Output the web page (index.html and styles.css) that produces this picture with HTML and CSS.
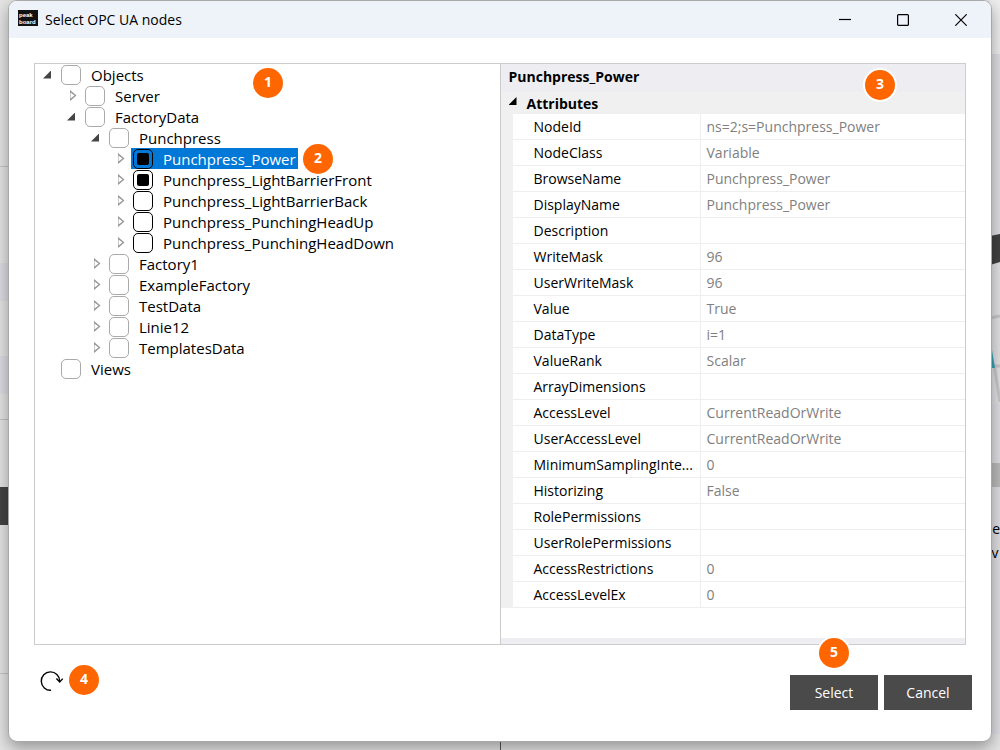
FILE: index.html
```html
<!DOCTYPE html>
<html lang="en">

<head>
    <meta charset="UTF-8">
    <meta name="viewport" content="width=device-width, initial-scale=1.0">
    <title>Select OPC UA nodes</title>
    <link rel="stylesheet" href="styles.css">
</head>

<body>
    <!-- parts of the designer behind the dialog -->
    <div class="backdrop">
        <div class="side-left">
            <div class="pane pane-top"></div>
            <div class="pane pane-gap"></div>
            <div class="pane-row"></div>
            <div class="pane pane-mid"></div>
            <div class="pane-row"></div>
            <div class="pane pane-small"></div>
            <div class="pane pane-low"></div>
            <div class="pane-dark"></div>
            <div class="pane pane-end"></div>
        </div>
        <div class="divider"></div>
        <div class="side-right">
            <svg class="gauge" width="10" height="170" viewBox="0 0 10 170">
                <path d="M0 3 L10 1 V170 H0Z" fill="#e2e2e4"/>
                <path d="M0 2 L10 0 V28 L0 31Z" fill="#414141"/>
                <path d="M0 84 L10 82 M0 132 H10 M4 130 L10 168" stroke="#c8c8ca" stroke-width="3" fill="none"/>
                <path d="M0 104 L5 134 H0Z" fill="#39a3b3"/>
            </svg>
            <div class="side-bar"></div>
            <div class="side-text">ne<br>ev</div>
        </div>
    </div>

    <div class="window">
        <div class="title-bar">
            <svg class="logo" width="20" height="16" viewBox="0 0 20 16">
                <rect width="20" height="16" fill="#111"/>
                <text x="1" y="7">peak</text>
                <text x="1" y="14">board</text>
            </svg>
            <h1 class="title">Select OPC UA nodes</h1>
            <button class="win-btn" aria-label="Minimize">
                <svg width="12" height="12" viewBox="0 0 12 12"><path d="M0 5.5H12"/></svg>
            </button>
            <button class="win-btn" aria-label="Maximize">
                <svg width="12" height="12" viewBox="0 0 12 12"><rect x=".6" y=".6" width="10.8" height="10.8" rx="1"/></svg>
            </button>
            <button class="win-btn" aria-label="Close">
                <svg width="12" height="12" viewBox="0 0 12 12"><path d="M.3 .3L11.7 11.7M11.7 .3L.3 11.7"/></svg>
            </button>
        </div>

        <div class="panels">
            <div class="tree-panel">
                <span class="badge badge-tree">1</span>
                <ul class="tree">
                    <li>
                        <div class="row"><button class="exp open" aria-label="Collapse"></button><label><input type="checkbox">Objects</label></div>
                        <ul>
                            <li>
                                <div class="row"><button class="exp" aria-label="Expand"></button><label><input type="checkbox">Server</label></div>
                            </li>
                            <li>
                                <div class="row"><button class="exp open" aria-label="Collapse"></button><label><input type="checkbox">FactoryData</label></div>
                                <ul>
                                    <li>
                                        <div class="row"><button class="exp open" aria-label="Collapse"></button><label><input type="checkbox">Punchpress</label></div>
                                        <ul class="vars">
                                            <li>
                                                <div class="row"><button class="exp" aria-label="Expand"></button><label class="selected"><input type="checkbox" checked>Punchpress_Power</label><span class="badge badge-node">2</span></div>
                                            </li>
                                            <li>
                                                <div class="row"><button class="exp" aria-label="Expand"></button><label><input type="checkbox" checked>Punchpress_LightBarrierFront</label></div>
                                            </li>
                                            <li>
                                                <div class="row"><button class="exp" aria-label="Expand"></button><label><input type="checkbox">Punchpress_LightBarrierBack</label></div>
                                            </li>
                                            <li>
                                                <div class="row"><button class="exp" aria-label="Expand"></button><label><input type="checkbox">Punchpress_PunchingHeadUp</label></div>
                                            </li>
                                            <li>
                                                <div class="row"><button class="exp" aria-label="Expand"></button><label><input type="checkbox">Punchpress_PunchingHeadDown</label></div>
                                            </li>
                                        </ul>
                                    </li>
                                    <li>
                                        <div class="row"><button class="exp" aria-label="Expand"></button><label><input type="checkbox">Factory1</label></div>
                                    </li>
                                    <li>
                                        <div class="row"><button class="exp" aria-label="Expand"></button><label><input type="checkbox">ExampleFactory</label></div>
                                    </li>
                                    <li>
                                        <div class="row"><button class="exp" aria-label="Expand"></button><label><input type="checkbox">TestData</label></div>
                                    </li>
                                    <li>
                                        <div class="row"><button class="exp" aria-label="Expand"></button><label><input type="checkbox">Linie12</label></div>
                                    </li>
                                    <li>
                                        <div class="row"><button class="exp" aria-label="Expand"></button><label><input type="checkbox">TemplatesData</label></div>
                                    </li>
                                </ul>
                            </li>
                        </ul>
                    </li>
                    <li>
                        <div class="row"><span class="no-exp"></span><label><input type="checkbox">Views</label></div>
                    </li>
                </ul>
            </div>

            <div class="props">
                <span class="badge badge-props">3</span>
                <h2 class="props-title">Punchpress_Power</h2>
                <div class="group"><button class="exp open" aria-label="Collapse"></button>Attributes</div>
                <div class="grid">
                    <table>
                        <tr><th scope="row">NodeId</th><td>ns=2;s=Punchpress_Power</td></tr>
                        <tr><th scope="row">NodeClass</th><td>Variable</td></tr>
                        <tr><th scope="row">BrowseName</th><td>Punchpress_Power</td></tr>
                        <tr><th scope="row">DisplayName</th><td>Punchpress_Power</td></tr>
                        <tr><th scope="row">Description</th><td></td></tr>
                        <tr><th scope="row">WriteMask</th><td>96</td></tr>
                        <tr><th scope="row">UserWriteMask</th><td>96</td></tr>
                        <tr><th scope="row">Value</th><td>True</td></tr>
                        <tr><th scope="row">DataType</th><td>i=1</td></tr>
                        <tr><th scope="row">ValueRank</th><td>Scalar</td></tr>
                        <tr><th scope="row">ArrayDimensions</th><td></td></tr>
                        <tr><th scope="row">AccessLevel</th><td>CurrentReadOrWrite</td></tr>
                        <tr><th scope="row">UserAccessLevel</th><td>CurrentReadOrWrite</td></tr>
                        <tr><th scope="row">MinimumSamplingInte...</th><td>0</td></tr>
                        <tr><th scope="row">Historizing</th><td>False</td></tr>
                        <tr><th scope="row">RolePermissions</th><td></td></tr>
                        <tr><th scope="row">UserRolePermissions</th><td></td></tr>
                        <tr><th scope="row">AccessRestrictions</th><td>0</td></tr>
                        <tr><th scope="row">AccessLevelEx</th><td>0</td></tr>
                    </table>
                </div>
                <div class="props-foot"></div>
            </div>
        </div>

        <div class="footer">
            <button class="refresh" aria-label="Refresh">
                <svg width="24" height="24" viewBox="0 0 24 24">
                    <path d="M11 21.3A9.2 9.2 0 1 1 19.7 12"/>
                    <path d="M16.4 9.6L19.7 13L22.8 9.6"/>
                </svg>
            </button>
            <span class="badge">4</span>
            <div class="actions">
                <span class="badge badge-select">5</span>
                <button class="btn">Select</button>
                <button class="btn">Cancel</button>
            </div>
        </div>
    </div>
</body>

</html>
```
FILE: styles.css
```css
* {
    box-sizing: border-box;
}

body {
    margin: 0;
    min-height: 100vh;
    display: flex;
    padding: 0 8px 8px;
    font-family: "Open Sans", "Noto Sans", sans-serif;
    font-size: 14px;
    color: #000;
    background-color: #e4e4e4;
}

button {
    border: none;
    background: none;
    padding: 0;
    font: inherit;
    cursor: pointer;
}

ul {
    list-style: none;
    margin: 0;
    padding: 0;
}

/* Designer behind the dialog */
.backdrop {
    position: absolute;
    inset: 0;
    display: flex;
    justify-content: space-between;
    overflow: hidden;
}

.side-left {
    width: 10px;
}

.pane {
    border-bottom: 1px solid #c4c4c6;
}

.pane-top {
    height: 167px;
}

.pane-gap {
    height: 96px;
    border: none;
}

.pane-row {
    height: 38px;
    background-color: #dcdce2;
}

.pane-mid {
    height: 55px;
    border: none;
}

.pane-small {
    height: 26px;
}

.pane-low {
    height: 67px;
    border: none;
}

.pane-dark {
    height: 38px;
    background-color: #444;
}

.pane-end {
    height: 149px;
}

.divider {
    width: 1px;
    background-color: #555;
}

.side-right {
    width: 10px;
    height: 734px;
    border-top: 54px solid #eee;
    background-color: #dedee4;
}

.gauge {
    display: block;
    margin-top: 180px;
}

.side-bar {
    height: 24px;
    margin-top: 59px;
    background-color: #bbb;
}

.side-text {
    display: flex;
    justify-content: flex-end;
    margin-top: 30px;
    line-height: 24px;
}

/* Dialog */
.window {
    position: relative;
    flex: 1;
    display: flex;
    flex-direction: column;
    border: 1px solid #a8a8a8;
    border-radius: 9px;
    background-color: #fff;
    box-shadow: 0 6px 16px rgba(0, 0, 0, 0.35);
}

.title-bar {
    display: flex;
    align-items: center;
    height: 37px;
    padding: 0 1px 0 9px;
    background-color: #eef3f9;
    border-radius: 8px 8px 0 0;
}

.logo {
    margin-bottom: 3px;
}

.logo text {
    font-family: "Liberation Sans", sans-serif;
    font-size: 6px;
    font-weight: bold;
    fill: #fff;
}

.title {
    flex: 1;
    margin: 0 0 0 7px;
    font-size: 14px;
    font-weight: normal;
}

.win-btn {
    width: 58px;
    height: 36px;
    display: flex;
    align-items: center;
    justify-content: center;
}

.win-btn svg {
    fill: none;
    stroke: #000;
    stroke-width: 1.2;
}

.panels {
    flex: 1;
    display: flex;
    margin: 25px 25px 0;
    border: 1px solid #ccc;
}

.tree-panel {
    flex: 1;
    position: relative;
    border-right: 1px solid #ccc;
}

.tree {
    font-size: 15px;
}

.tree ul {
    padding-left: 24px;
}

.row {
    display: flex;
    align-items: center;
    height: 21px;
    position: relative;
}

.row label {
    display: flex;
    align-items: center;
    gap: 10px;
    height: 21px;
    padding: 0 2px;
}

.row .selected {
    background-color: #0078d7;
    color: #fff;
}

.exp,
.no-exp {
    width: 24px;
    height: 20px;
}

.exp {
    display: flex;
    align-items: center;
    justify-content: center;
    padding-left: 4px;
}

.exp::before {
    content: "";
    width: 7px;
    height: 12px;
    background-color: #999;
    clip-path: polygon(evenodd, 0 0, 100% 50%, 0 100%, 0 0, 1px 3px, 1px 9px, 5px 50%, 1px 3px);
}

.exp.open {
    padding-left: 0;
}

.exp.open::before {
    width: 8px;
    height: 8px;
    background-color: #444;
    clip-path: polygon(100% 0, 100% 100%, 0 100%);
}

.row input {
    appearance: none;
    display: grid;
    place-content: center;
    width: 20px;
    height: 20px;
    margin: 0;
    border: 1px solid #aaa;
    border-radius: 5px;
    background-color: #fff;
}

.row .selected input {
    background-color: transparent;
}

.vars input {
    border-color: #000;
}

.row input:checked::before {
    content: "";
    width: 12px;
    height: 12px;
    border-radius: 2px;
    background-color: #000;
}

.props {
    flex: 1;
    position: relative;
    display: flex;
    flex-direction: column;
}

.props-title {
    margin: 0;
    height: 28px;
    padding-left: 8px;
    line-height: 26px;
    font-size: 14px;
    background-color: #eeeef2;
}

.group {
    display: flex;
    align-items: center;
    height: 22px;
    font-weight: bold;
    background-color: #f0f0f0;
}

.group .exp {
    width: 26px;
    padding: 0 2px 4px 0;
}

.group .exp::before {
    background-color: #000;
}

.grid {
    padding-left: 12px;
    background-color: #f0f0f0;
}

table {
    width: 100%;
    table-layout: fixed;
    border-collapse: separate;
    border-spacing: 0;
    background-color: #fff;
}

th,
td {
    height: 26px;
    padding: 0;
    border-bottom: 1px solid #eee;
    line-height: 20px;
    text-align: left;
    font-weight: normal;
    white-space: nowrap;
}

th {
    width: 188px;
    padding-left: 21px;
    border-right: 1px solid #eee;
}

td {
    padding-left: 6px;
    color: #808080;
}

.props-foot {
    height: 6px;
    margin-top: auto;
    background-color: #eeeef2;
}

.footer {
    display: flex;
    align-items: flex-start;
    padding: 20px 19px 31px 31px;
}

.refresh {
    width: 24px;
    height: 24px;
    margin-top: 4px;
}

.refresh svg {
    display: block;
    fill: none;
    stroke: #000;
    stroke-width: 1.4;
}

.footer > .badge {
    margin-left: 5px;
}

.actions {
    position: relative;
    display: flex;
    gap: 6px;
    margin: 10px 0 0 auto;
}

.btn {
    width: 88px;
    height: 35px;
    background-color: #4a4a4a;
    color: #fff;
}

.btn:hover {
    background-color: #666;
}

/* Numbered markers */
.badge {
    width: 30px;
    height: 30px;
    border-radius: 50%;
    background-color: #ff6600;
    box-shadow: 0 0 0 2px #fff;
    color: #fff;
    font-size: 14px;
    font-weight: bold;
    line-height: 27px;
    text-align: center;
}

.badge-tree {
    position: absolute;
    left: 218px;
    top: 4px;
}

.badge-node {
    position: absolute;
    left: 196px;
    z-index: 1;
}

.badge-props {
    position: absolute;
    right: 70px;
    top: 6px;
}

.badge-select {
    position: absolute;
    left: 29px;
    top: -37px;
}
```
